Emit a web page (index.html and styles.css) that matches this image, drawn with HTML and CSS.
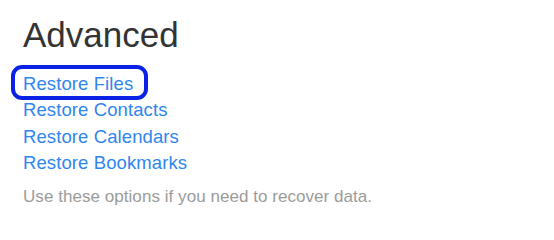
FILE: index.html
```html
<!DOCTYPE html>
<html>
<head>
<meta charset="utf-8">
<link rel="stylesheet" href="styles.css">
</head>
<body>
<main class="panel">
  <h1 class="title">Advanced</h1>
  <ul class="links">
    <li><a class="link link--focused" href="#">Restore Files</a></li>
    <li><a class="link" href="#">Restore Contacts</a></li>
    <li><a class="link" href="#">Restore Calendars</a></li>
    <li><a class="link" href="#">Restore Bookmarks</a></li>
  </ul>
  <p class="note">Use these options if you need to recover data.</p>
</main>
</body>
</html>
```
FILE: styles.css
```css
html, body {
  margin: 0;
  padding: 0;
  background: #ffffff;
}

body {
  font-family: "Liberation Sans", Arial, sans-serif;
}

.panel {
  padding: 15px 0 0 23px;
}

.title {
  margin: 0 0 16px 0;
  font-size: 35px;
  line-height: 40px;
  font-weight: normal;
  color: #333333;
}

.links {
  list-style: none;
  margin: 0;
  padding: 0;
}

.links li {
  font-size: 18.5px;
  line-height: 26.4px;
  height: 26.4px;
}

.link {
  display: inline-block;
  position: relative;
  color: #2f86ee;
  text-decoration: none;
  letter-spacing: 0.1px;
}

.link--focused::after {
  content: "";
  position: absolute;
  left: -12px;
  right: -15px;
  top: -6px;
  bottom: -3px;
  border: 4px solid #0a22e6;
  border-radius: 11px;
}

.note {
  margin: 10px 0 0 0;
  font-size: 17px;
  line-height: 20px;
  letter-spacing: 0.05px;
  color: #9b9b9b;
}
```
